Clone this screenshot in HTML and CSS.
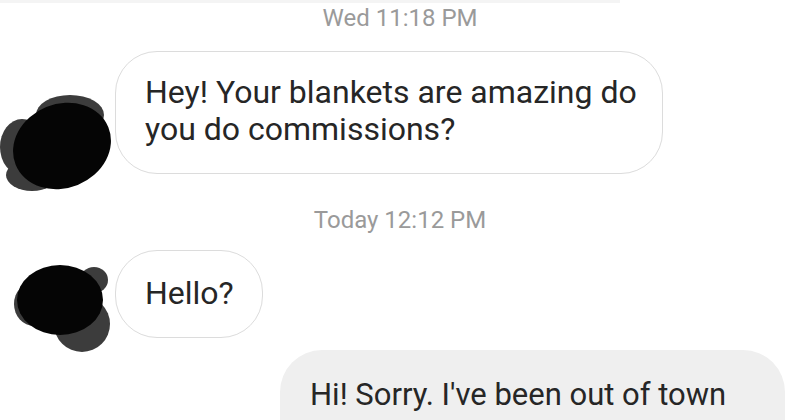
FILE: index.html
```html
<!DOCTYPE html>
<html>
<head>
<meta charset="utf-8">
<link rel="stylesheet" href="styles.css">
</head>
<body>
<div class="topbar"></div>
<div class="chat">
  <div class="time time-first">Wed 11:18 PM</div>
  <div class="row row-1">
    <div class="avatar avatar-1">
      <svg width="115" height="102" viewBox="0 0 115 102">
        <ellipse cx="22" cy="56" rx="22" ry="28" fill="#3c3c3c"/>
        <ellipse cx="70" cy="24" rx="34" ry="20" fill="#3c3c3c"/>
        <ellipse cx="32" cy="84" rx="26" ry="16" fill="#3c3c3c"/>
        <ellipse cx="62" cy="55" rx="50" ry="42" transform="rotate(-22 62 55)" fill="#050505"/>
      </svg>
    </div>
    <div class="bubble bubble-in">Hey! Your blankets are amazing do<br>you do commissions?</div>
  </div>
  <div class="time">Today 12:12 PM</div>
  <div class="row row-2">
    <div class="avatar avatar-2">
      <svg width="115" height="92" viewBox="0 0 115 92">
        <ellipse cx="82" cy="64" rx="28" ry="28" fill="#3c3c3c"/>
        <ellipse cx="94" cy="20" rx="14" ry="13" fill="#3c3c3c"/>
        <ellipse cx="34" cy="44" rx="20" ry="22" fill="#3c3c3c"/>
        <ellipse cx="60" cy="40" rx="43" ry="35" fill="#050505"/>
      </svg>
    </div>
    <div class="bubble bubble-in">Hello?</div>
  </div>
  <div class="row row-out">
    <div class="bubble bubble-out">Hi! Sorry. I've been out of town<br>and haven't been on Instagram much</div>
  </div>
</div>
</body>
</html>
```
FILE: styles.css
```css
html, body {
  margin: 0;
  padding: 0;
  background: #ffffff;
}
body {
  width: 800px;
  height: 420px;
  overflow: hidden;
  font-family: Roboto, "Liberation Sans", sans-serif;
  position: relative;
}
.topbar {
  position: absolute;
  top: 0;
  left: 0;
  width: 620px;
  height: 3px;
  background: #f4f4f4;
}
.chat {
  display: flex;
  flex-direction: column;
}
.time {
  text-align: center;
  color: #9a9a9a;
  font-size: 24px;
  line-height: 26px;
  margin-top: 33px;
}
.time-first {
  margin-top: 5px;
}
.row {
  display: flex;
  align-items: flex-end;
  margin-top: 20px;
}
.row-2 {
  margin-top: 17px;
}
.avatar {
  width: 115px;
  flex: none;
  display: flex;
}
.avatar svg {
  display: block;
}
.avatar-1 {
  margin-bottom: -19px;
}
.avatar-2 {
  margin-bottom: -14px;
}
.bubble {
  font-size: 32px;
  line-height: 37px;
  color: #262626;
  border-radius: 42px;
  white-space: nowrap;
}
.bubble-in {
  background: #ffffff;
  border: 1.5px solid #dcdcdc;
  padding: 22px 25px 25px 29px;
}
.row-2 .bubble-in {
  padding: 24px 28px 25px 29px;
}
.row-out {
  justify-content: flex-end;
  margin-top: 12px;
  padding-right: 15px;
}
.bubble-out {
  background: #efefef;
  padding: 26px 58px 24px 30px;
  font-size: 31px;
  line-height: 38px;
  width: 417px;
}
```
